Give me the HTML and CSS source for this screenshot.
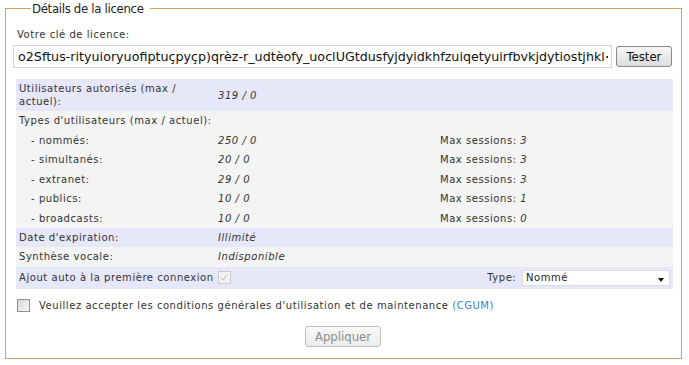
FILE: index.html
```html
<!DOCTYPE html>
<html lang="fr">
<head>
<meta charset="utf-8">
<title>Détails de la licence</title>
<link rel="stylesheet" href="styles.css">
</head>
<body>
<fieldset class="licence">
  <legend class="licence-title">Détails de la licence</legend>
  <div class="key-label">Votre clé de licence:</div>
  <div class="key-row">
    <input class="key-input" type="text" value="o2Sftus-rityuioryuofiptuçpyçp)qrèz-r_udtèofy_uoclUGtdusfyjdyidkhfzuiqetyuirfbvkjdytiostjhkl&lt;:nbvcxw">
    <button class="btn btn-test" type="button">Tester</button>
  </div>
  <table class="info">
    <colgroup>
      <col class="c1"><col class="c2"><col class="c3">
    </colgroup>
    <tr class="blue">
      <td class="lbl">Utilisateurs autorisés (max / actuel):</td>
      <td class="val">319 / 0</td>
      <td></td>
    </tr>
    <tr class="gray">
      <td class="lbl" colspan="3">Types d'utilisateurs (max / actuel):</td>
    </tr>
    <tr class="gray">
      <td class="lbl sub">- nommés:</td>
      <td class="val">250 / 0</td>
      <td class="sess">Max sessions: <em>3</em></td>
    </tr>
    <tr class="gray">
      <td class="lbl sub">- simultanés:</td>
      <td class="val">20 / 0</td>
      <td class="sess">Max sessions: <em>3</em></td>
    </tr>
    <tr class="gray">
      <td class="lbl sub">- extranet:</td>
      <td class="val">29 / 0</td>
      <td class="sess">Max sessions: <em>3</em></td>
    </tr>
    <tr class="gray">
      <td class="lbl sub">- publics:</td>
      <td class="val">10 / 0</td>
      <td class="sess">Max sessions: <em>1</em></td>
    </tr>
    <tr class="gray">
      <td class="lbl sub">- broadcasts:</td>
      <td class="val">10 / 0</td>
      <td class="sess">Max sessions: <em>0</em></td>
    </tr>
    <tr class="blue">
      <td class="lbl">Date d'expiration:</td>
      <td class="val">Illimité</td>
      <td></td>
    </tr>
    <tr class="gray">
      <td class="lbl">Synthèse vocale:</td>
      <td class="val">Indisponible</td>
      <td></td>
    </tr>
    <tr class="blue">
      <td class="lbl nowrap">Ajout auto à la première connexion</td>
      <td class="val"><input class="chk-disabled" type="checkbox" checked disabled></td>
      <td class="type-cell">Type: <span class="select-wrap"><select class="type-select"><option>Nommé</option></select></span></td>
    </tr>
  </table>
  <div class="accept">
    <input class="chk" type="checkbox">
    <span class="accept-text">Veuillez accepter les conditions générales d'utilisation et de maintenance <a class="cgum" href="#">(CGUM)</a></span>
  </div>
  <div class="actions">
    <button class="btn btn-apply" type="button" disabled>Appliquer</button>
  </div>
</fieldset>
</body>
</html>
```

FILE: styles.css
```css
html, body {
  margin: 0;
  padding: 0;
  background: #ffffff;
}

body {
  font-family: "DejaVu Sans", Verdana, sans-serif;
  font-size: 10px;
  letter-spacing: 0.55px;
  color: #333333;
}

.licence {
  box-sizing: border-box;
  width: 676px;
  height: 358px;
  margin: 1px 0 0 5px;
  padding: 13px 8px 0 7px;
  border: 1px solid #d4a05a;
  border-radius: 0;
}

.licence-title {
  margin-left: 18px;
  padding: 0 6px 0 1px;
  font-family: "DejaVu Sans Condensed", "DejaVu Sans", sans-serif;
  font-size: 13px;
  letter-spacing: -0.3px;
  color: #222222;
}

.key-label {
  padding-left: 4px;
  line-height: 12px;
}

.key-row {
  display: flex;
  align-items: center;
  gap: 4px;
  margin-top: 4px;
}

.key-input {
  box-sizing: border-box;
  width: 599px;
  height: 23px;
  margin: 0;
  padding: 0 3px 0 4px;
  border: 1px solid #d6d6d6;
  font-family: "DejaVu Sans", Verdana, sans-serif;
  font-size: 12.7px;
  letter-spacing: 0;
  color: #111111;
  background: #ffffff;
}

.btn {
  box-sizing: border-box;
  margin: 0;
  font-family: "DejaVu Sans Condensed", "DejaVu Sans", sans-serif;
  font-size: 13px;
  letter-spacing: 0;
  border-radius: 3px;
  cursor: default;
}

.btn-test {
  width: 56px;
  height: 21px;
  padding: 0;
  color: #111111;
  border: 1px solid #8a8a8a;
  background: linear-gradient(#f6f6f6, #dcdcdc);
}

.info {
  width: 657px;
  margin: 11px 0 0 3px;
  border-collapse: collapse;
  table-layout: fixed;
}

.c1 { width: 199px; }
.c2 { width: 222px; }

.info td {
  padding: 3px 3px;
  line-height: 13px;
  vertical-align: middle;
}

.info tr.gray td,
.info tr.blue + tr.gray td {
  padding-top: 3px;
  padding-bottom: 3.5px;
}

.blue { background: #e7e7fa; }
.gray { background: #f4f4f4; }

.lbl.sub { padding-left: 15px; }
.nowrap { white-space: nowrap; }

.val { font-style: italic; }

.sess em { font-style: italic; }

.type-cell {
  text-align: right;
  white-space: nowrap;
  padding-right: 2px;
}

.select-wrap {
  position: relative;
  display: inline-block;
  vertical-align: middle;
  margin-left: 2px;
}

.select-wrap::after {
  content: "";
  position: absolute;
  right: 6px;
  top: 8px;
  border-left: 3.5px solid transparent;
  border-right: 3.5px solid transparent;
  border-top: 4px solid #111111;
}

.type-select {
  appearance: none;
  -webkit-appearance: none;
  box-sizing: border-box;
  width: 148px;
  height: 16px;
  margin: 0;
  padding: 0 3px;
  border: 1px solid #dcdcdc;
  border-radius: 0;
  background: #ffffff;
  font-family: "DejaVu Sans", Verdana, sans-serif;
  font-size: 10px;
  letter-spacing: 0.55px;
  color: #222222;
  text-align: left;
}

.chk-disabled {
  appearance: none;
  -webkit-appearance: none;
  position: relative;
  box-sizing: border-box;
  width: 13px;
  height: 13px;
  margin: 0;
  vertical-align: middle;
  border: 1px solid #c9c9c9;
  background: #f3f3f3;
}

.chk-disabled::after {
  content: "";
  position: absolute;
  left: 3px;
  top: 1px;
  width: 3px;
  height: 6px;
  border-right: 1.5px solid #c2c2c2;
  border-bottom: 1.5px solid #c2c2c2;
  transform: rotate(40deg);
}

.accept {
  display: flex;
  align-items: center;
  gap: 9px;
  margin: 10px 0 0 4px;
}

.chk {
  appearance: none;
  -webkit-appearance: none;
  box-sizing: border-box;
  width: 13px;
  height: 13px;
  margin: 0;
  border: 1px solid #8f8f8f;
  background: linear-gradient(135deg, #d6d6d6, #f8f8f8);
}

.cgum {
  color: #3b7dd8;
  text-decoration: none;
}

.actions {
  display: flex;
  justify-content: center;
  margin-top: 14px;
}

.btn-apply {
  width: 76px;
  height: 21px;
  padding: 0;
  color: #8c8c8c;
  border: 1px solid #bdbdbd;
  background: linear-gradient(#f8f8f8, #ececec);
}
```
